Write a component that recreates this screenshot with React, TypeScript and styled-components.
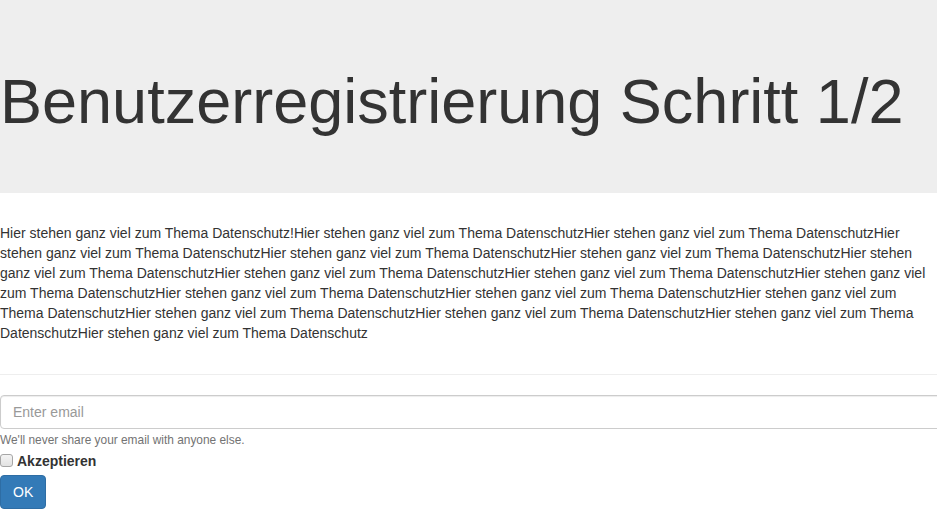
import styled, { createGlobalStyle } from "styled-components";

const GlobalStyle = createGlobalStyle`
  html, body {
    margin: 0;
    padding: 0;
    background: #fff;
  }
  body {
    font-family: "Liberation Sans", Arial, sans-serif;
    font-size: 14px;
    line-height: 1.42857143;
    color: #333;
    overflow-x: hidden;
  }
  * {
    box-sizing: border-box;
  }
`;

const Page = styled.div`
  width: 100%;
  overflow: hidden;
`;

const Jumbotron = styled.div`
  background: #eee;
  padding: 47px 0 47px;
  margin-bottom: 30px;
`;

const Title = styled.h1`
  margin: 20px 0 10px;
  font-size: 63px;
  font-weight: 500;
  line-height: 1.1;
  color: #333;
`;

const Text = styled.p`
  margin: 0 0 10px;
`;

const Rule = styled.hr`
  margin: 31px 0 20px;
  border: 0;
  border-top: 1px solid #eee;
`;

const Form = styled.form`
  display: flex;
  flex-direction: column;
`;

const Input = styled.input`
  display: block;
  width: calc(100% + 20px);
  height: 34px;
  padding: 6px 12px;
  font-family: inherit;
  font-size: 14px;
  color: #555;
  background: #fff;
  border: 1px solid #ccc;
  border-radius: 4px;
  box-shadow: inset 0 1px 1px rgba(0, 0, 0, 0.075);
  outline: none;

  &::placeholder {
    color: #999;
  }
`;

const Help = styled.small`
  display: block;
  margin-top: 4px;
  font-size: 11.9px;
  line-height: 1.3;
  color: #737373;
`;

const CheckRow = styled.label`
  display: flex;
  align-items: center;
  gap: 4px;
  margin-top: 2px;
  font-weight: bold;
  font-size: 14px;
  line-height: 20px;
`;

const Check = styled.input`
  appearance: none;
  margin: 0;
  width: 13px;
  height: 13px;
  border: 1px solid #a6a6a6;
  border-radius: 3px;
  background: linear-gradient(#f4f4f4, #e2e2e2);

  &:checked {
    background: #337ab7;
    border-color: #2e6da4;
  }
`;

const Button = styled.button`
  align-self: flex-start;
  margin-top: 4px;
  padding: 6px 12px;
  font-family: inherit;
  font-size: 14px;
  line-height: 20px;
  color: #fff;
  background: #337ab7;
  border: 1px solid #2e6da4;
  border-radius: 4px;
  cursor: pointer;
`;

const chunk = "Hier stehen ganz viel zum Thema Datenschutz";
const body =
  chunk +
  "!" +
  Array.from({ length: 16 }, () => chunk).join("");

export default function App() {
  return (
    <Page>
      <GlobalStyle />
      <Jumbotron>
        <Title>Benutzerregistrierung Schritt 1/2</Title>
      </Jumbotron>
      <Text>{body}</Text>
      <Rule />
      <Form onSubmit={(e) => e.preventDefault()}>
        <Input type="email" placeholder="Enter email" />
        <Help>We'll never share your email with anyone else.</Help>
        <CheckRow>
          <Check type="checkbox" />
          Akzeptieren
        </CheckRow>
        <Button type="submit">OK</Button>
      </Form>
    </Page>
  );
}
